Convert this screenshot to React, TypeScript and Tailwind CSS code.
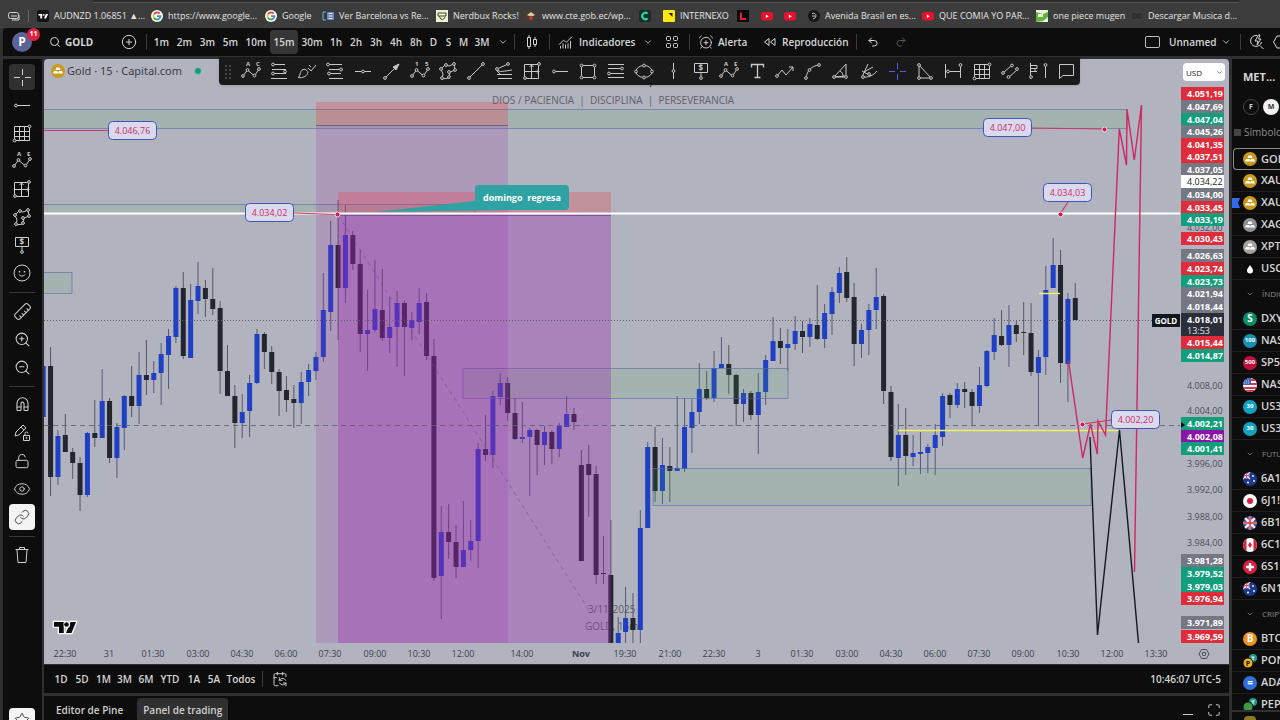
import React from "react";
import {
  AlarmClockPlus,
  CalendarSync,
  ChartNoAxesCombined,
  ChevronDown,
  CirclePlus,
  Eye,
  Link,
  LockOpen,
  Magnet,
  Maximize,
  Redo2,
  Ruler,
  Search,
  Smile,
  Star,
  Trash2,
  Undo2,
  ZoomIn,
  ZoomOut,
} from "lucide-react";

/* ---------- Bookmarks ---------- */

const GoogleIcon = () => (
  <svg viewBox="0 0 12 12" className="size-3">
    <circle cx="6" cy="6" r="6" fill="#fff" />
    <g fill="none" strokeWidth="1.8">
      <path d="M3 4.2A3.5 3.5 0 0 1 8.6 3.6" stroke="#ea4335" />
      <path d="M3 7.8A3.5 3.5 0 0 1 3 4.2" stroke="#fbbc05" />
      <path d="M8.2 8.7A3.5 3.5 0 0 1 3 7.8" stroke="#34a853" />
      <path d="M6 6.2H9.4A3.5 3.5 0 0 1 8.2 8.7" stroke="#4285f4" />
    </g>
  </svg>
);

const YoutubeIcon = () => (
  <svg viewBox="0 0 12 12" className="size-3">
    <rect y="2" width="12" height="8.5" rx="2.5" fill="#e8112d" />
    <path d="M4.8 4.5v3.5l3-1.75z" fill="#fff" />
  </svg>
);

const TvIcon = () => (
  <svg viewBox="0 0 12 12" className="size-3">
    <rect width="12" height="12" rx="2" fill="#131313" />
    <path d="M1.5 4h3.6v4.5H3.3V5.6H1.5zM8.8 4h2.3L9 8.5H7z" fill="#fff" />
    <circle cx="6.6" cy="4.9" r="0.9" fill="#fff" />
  </svg>
);

const NewsIcon = () => (
  <svg viewBox="0 0 12 12" className="size-3">
    <path d="M1 2h3M1 2v8h3M6 2v8M6 6h2" stroke="#7ea9dc" fill="none" />
    <rect x="5" y="2" width="7" height="8" fill="#5f86bd" />
    <path d="M6.5 3.5h4M6.5 6h4M6.5 8.5h4" stroke="#dfe9f6" />
  </svg>
);

const NerdIcon = () => (
  <svg viewBox="0 0 12 12" className="size-3">
    <rect width="12" height="12" fill="#f3f1d6" />
    <path d="M2 3h8v3H2zM4 8c1 2 4 2 5-1M3 6l2 3" stroke="#3d4a22" fill="none" />
  </svg>
);

const CrestIcon = () => (
  <svg viewBox="0 0 12 12" className="size-3">
    <circle cx="6" cy="6" r="5.5" fill="#4a3b33" />
    <path d="M2 5l4-3 4 3-2 1H4z" fill="#d7c9a0" />
    <circle cx="6" cy="8" r="2" fill="#b33f3a" />
  </svg>
);

const GreenC = () => (
  <svg viewBox="0 0 12 12" className="size-3">
    <rect width="12" height="12" rx="2" fill="#1e2a2a" />
    <path d="M8.6 3.6a3.2 3.2 0 1 0 0 4.8" stroke="#21d6a0" strokeWidth="2.2" fill="none" />
  </svg>
);

const NexoIcon = () => (
  <svg viewBox="0 0 12 12" className="size-3">
    <rect width="12" height="12" rx="1" fill="#ffe712" />
    <path d="M5.5 3h4v4L8 5.5z" fill="#222" />
  </svg>
);

const LogoL = () => (
  <svg viewBox="0 0 12 12" className="size-3">
    <rect width="12" height="12" fill="#0b0b0b" />
    <path d="M4 2.5v6.5h5" stroke="#e21b3c" strokeWidth="2" fill="none" />
  </svg>
);

const RoundDark = () => (
  <svg viewBox="0 0 12 12" className="size-3">
    <circle cx="6" cy="6" r="6" fill="#161616" />
    <path d="M4 3.5c4-1.500 6 4 1 5.500M4 6h3" stroke="#c9c9c9" fill="none" />
  </svg>
);

const GreenPic = () => (
  <svg viewBox="0 0 12 12" className="size-3">
    <rect width="12" height="12" fill="#e9f3df" />
    <path d="M0 2l7 2 5-2v5l-5 4-7 1z" fill="#5fb53c" />
    <path d="M2 4h5v3H2z" fill="#e9f3df" />
  </svg>
);

const DimIcon = () => (
  <svg viewBox="0 0 12 12" className="size-3">
    <path d="M2 4h3v4H2zM7 4h3v4H7z" stroke="#242424" fill="none" />
  </svg>
);

const bookmarks = [
  { icon: <TvIcon />, text: "AUDNZD 1.06851 ▲...", w: "w-[114px]" },
  { icon: <GoogleIcon />, text: "https://www.google...", w: "w-[114px]" },
  { icon: <GoogleIcon />, text: "Google", w: "w-[57px]" },
  { icon: <NewsIcon />, text: "Ver Barcelona vs Re...", w: "w-[114px]" },
  { icon: <NerdIcon />, text: "Nerdbux Rocks!", w: "w-[89px]" },
  { icon: <CrestIcon />, text: "www.cte.gob.ec/wp...", w: "w-[114px]" },
  { icon: <GreenC />, text: "", w: "w-6" },
  { icon: <NexoIcon />, text: "INTERNEXO", w: "w-[74px]" },
  { icon: <LogoL />, text: "", w: "w-6" },
  { icon: <YoutubeIcon />, text: "", w: "w-[23px]" },
  { icon: <YoutubeIcon />, text: "", w: "w-6" },
  { icon: <RoundDark />, text: "Avenida Brasil en es...", w: "w-[114px]" },
  { icon: <YoutubeIcon />, text: "QUE COMIA YO PAR...", w: "w-[114px]" },
  { icon: <GreenPic />, text: "one piece mugen", w: "w-[95px]" },
  { icon: <DimIcon />, text: "Descargar Musica d...", w: "w-[114px]" },
];

const BookmarksBar = () => (
  <nav className="flex h-7 shrink-0 flex-col bg-[#3c3c3c] text-[9px] font-medium text-[#e4e4e4]">
    <div className="mr-10 ml-23 h-[3px] shrink-0 rounded-b border-b border-[#555] bg-[#2a2a2a]" />
    <div className="flex flex-1 items-center pl-2">
      <svg viewBox="0 0 12 12" className="size-3 shrink-0" fill="none" stroke="#d5d5d5">
        <rect x="0.5" y="2.500" width="10" height="6" rx="2" />
        <path d="M3 6h6M4 10h7V5" />
      </svg>
      <span className="mx-2 h-3 w-px bg-[#666]" />
      {bookmarks.map((b, i) => (
        <a key={i} href="#" className={`flex shrink-0 items-center gap-[5px] whitespace-nowrap ${b.w}`}>
          {b.icon}
          {b.text}
        </a>
      ))}
    </div>
  </nav>
);

/* ---------- Drawing tool glyphs ---------- */

const N = ({ x, y }: { x: number; y: number }) => <circle cx={x} cy={y} r="1.4" fill="#1a1a1a" />;

const Zigzag = ({ a, b }: { a: string; b: string }) => (
  <>
    <path d="M2 15l4.500-6 7 6L18 8" />
    <N x={2} y={15} />
    <N x={6.5} y={9} />
    <N x={13.5} y={14.500} />
    <N x={18} y={8} />
    <text x="5" y="5" fontSize="6" fontWeight="700" fill="currentColor" stroke="none">
      {a}
    </text>
    <text x="15" y="5" fontSize="6" fontWeight="700" fill="currentColor" stroke="none">
      {b}
    </text>
  </>
);

const glyphs: Record<string, React.ReactNode> = {
  abc: <Zigzag a="A" b="C" />,
  waves: <Zigzag a="1" b="5" />,
  abcde: <Zigzag a="A" b="E" />,
  fibTrend: (
    <>
      <path d="M4 3.500h12M3 8.500h14M3 12.500h14M2 17.500h16" />
      <N x={4} y={3.5} />
      <N x={16} y={10.5} />
      <N x={4} y={12.5} />
    </>
  ),
  fibLevels: (
    <>
      <path d="M2 3.500h15M4 8.500h14M2 12.500h14M4 17.500h14" />
      <N x={3} y={3.5} />
      <N x={16} y={8.5} />
      <N x={4} y={12.5} />
    </>
  ),
  brush: <path d="M1 16.500c3-1 1-6 5-8 3-1 6 2 4 5-2 3-6 3.500-9 3zM11 7l3 3 5-6M12 4l2 2" />,
  hline: (
    <>
      <path d="M2 10.500h16" />
      <N x={10} y={10.5} />
    </>
  ),
  arrow: (
    <>
      <path d="M3 17L17 3" />
      <path d="M17 3l-6 3 3 3z" fill="currentColor" />
      <N x={3} y={17} />
    </>
  ),
  polygon: (
    <>
      <path d="M3 8l4-4 4 1 5-2 1 6-5 2-1 6-7 1 1-5z" />
      <N x={3} y={8} />
      <N x={8} y={4} />
      <N x={16} y={3} />
      <N x={17} y={9} />
      <N x={11} y={11} />
      <N x={11} y={16} />
      <N x={4} y={17} />
    </>
  ),
  trend: (
    <>
      <path d="M3 17L17 3" />
      <N x={3} y={17} />
      <N x={17} y={3} />
    </>
  ),
  fibFan: (
    <>
      <path d="M3 8l11-5M3 8c1 3 3 3 15 1M3 13.500h15M4 17.500h14M3 8v2l3 3" />
      <N x={3} y={8} />
      <N x={14} y={3} />
    </>
  ),
  range: (
    <>
      <path d="M2.500 3.500h14v14h-14zM9.500 4v13M3 10.500h14M7.500 6l2-2 2 2M15 8.500l2 2-2 2" />
      <N x={3} y={17} />
      <N x={17} y={3} />
    </>
  ),
  ray: (
    <>
      <path d="M4 10.500h14" />
      <N x={4} y={10.5} />
    </>
  ),
  rect: (
    <>
      <path d="M3.500 4.500h13v12h-13z" />
      <N x={3.5} y={4.5} />
      <N x={16.5} y={4.5} />
      <N x={3.5} y={16.5} />
      <N x={16.5} y={16.5} />
    </>
  ),
  fibExt: (
    <>
      <path d="M2 3.500h16M2 7.500h14M2 12.500h16M2 16.500h16" />
      <N x={16} y={7.500} />
      <N x={3} y={12.5} />
    </>
  ),
  ellipse: (
    <>
      <ellipse cx="10" cy="10.500" rx="8" ry="6" />
      <N x={2} y={10.5} />
      <N x={18} y={10.5} />
      <N x={10} y={4.5} />
      <N x={10} y={16.5} />
    </>
  ),
  vline: (
    <>
      <path d="M10.500 2v16" />
      <N x={10.5} y={10} />
    </>
  ),
  priceNote: (
    <>
      <path d="M3.500 2.500h13v9h-13zM10 12v4" />
      <N x={10} y={17} />
      <text x="7.500" y="10" fontSize="8" fontWeight="700" fill="currentColor" stroke="none">
        $
      </text>
    </>
  ),
  text: <path d="M4.500 6.500v-3h12v3M10.500 3.500v13M7.500 16.500h6" strokeWidth="1.300" />,
  zigArrow: (
    <>
      <path d="M2 15l5-6 4 5 7-8M14 6h4v4" />
      <N x={2} y={15} />
    </>
  ),
  curve: (
    <>
      <path d="M3 17C4 10 8 5 16 4" />
      <N x={3} y={17} />
      <N x={16} y={4} />
      <N x={6.5} y={9} />
    </>
  ),
  fanTriangle: (
    <>
      <path d="M3 16L15 3v12zM9 10c2 1 3 3 3 5M3 16h12" />
      <N x={3} y={16} />
      <N x={15} y={16} />
    </>
  ),
  wedge: (
    <>
      <path d="M9 3L3 16c6 1 12-2 15-6M5 11l9-5M3 10l9 5" />
      <N x={4} y={16} />
      <N x={10} y={13} />
    </>
  ),
  cross: <path d="M10.500 2v6M10.500 13v6M2 10.500h6M13 10.500h6" />,
  triangle: (
    <>
      <path d="M4 4v13h12z" />
      <N x={4} y={4} />
      <N x={4} y={17} />
      <N x={16} y={17} />
    </>
  ),
  dateRange: (
    <>
      <path d="M2.500 3v14M17.500 5v12M3 10.500h14" />
      <N x={17.5} y={4} />
      <N x={5} y={10.5} />
    </>
  ),
  grid: (
    <>
      <path d="M2.500 3.500h15v14h-15zM7.500 3v14M12.500 3v14M3 8.500h14M3 13.500h14" />
      <N x={2.5} y={17.5} />
      <N x={17.5} y={3.5} />
    </>
  ),
  channel: (
    <>
      <path d="M3 12l9-8M8 17l10-9" />
      <N x={3} y={12} />
      <N x={12} y={4.5} />
      <N x={8.5} y={16} />
      <N x={17} y={8} />
    </>
  ),
  volume: (
    <>
      <path d="M2.500 2v16M3 4.500h6v3H3M3 7.500h4v3H3M3 10.500h6M17.500 5v12" />
      <N x={17.5} y={4} />
      <N x={3} y={16} />
    </>
  ),
  comment: <path d="M3.500 3.500h14v11H7l-3.500 3z" />,
};

const Glyph = ({ name }: { name: string }) => (
  <svg viewBox="0 0 20 20" className="size-5" fill="none" stroke="currentColor" strokeWidth="1">
    {glyphs[name]}
  </svg>
);

const drawingTools = [
  "abc", "fibTrend", "brush", "fibLevels", "hline", "arrow", "waves", "polygon", "trend", "fibFan",
  "range", "ray", "rect", "fibExt", "ellipse", "vline", "priceNote", "abcde", "text", "zigArrow",
  "curve", "fanTriangle", "wedge", "cross", "triangle", "dateRange", "grid", "channel", "volume", "comment",
];

const DrawingToolbar = () => (
  <div className="absolute -top-0.5 left-[175px] z-10 flex h-7 w-[861px] items-center justify-between rounded-b bg-[#1a1a1a] text-[#c9c9c9] shadow">
    <svg viewBox="0 0 18 20" className="h-5 w-[18px]" fill="#5a5a5a">
      {[5, 9, 13, 17].map((y) => (
        <React.Fragment key={y}>
          <circle cx="7" cy={y} r="0.9" />
          <circle cx="11" cy={y} r="0.9" />
        </React.Fragment>
      ))}
    </svg>
    {drawingTools.map((t) => (
      <button
        key={t}
        aria-label={t}
        className={t === "cross" ? "flex h-7 w-7 items-center justify-center text-[#5357ff]" : "flex h-7 w-7 items-center justify-center"}
      >
        <Glyph name={t} />
      </button>
    ))}
  </div>
);

/* ---------- Header ---------- */

const intervals = [
  { label: "1m", w: "w-[23px]" },
  { label: "2m", w: "w-[23px]" },
  { label: "3m", w: "w-[23px]" },
  { label: "5m", w: "w-[23px]" },
  { label: "10m", w: "w-7" },
  { label: "15m", w: "w-7" },
  { label: "30m", w: "w-7" },
  { label: "1h", w: "w-5" },
  { label: "2h", w: "w-5" },
  { label: "3h", w: "w-5" },
  { label: "4h", w: "w-5" },
  { label: "8h", w: "w-5" },
  { label: "D", w: "w-[15px]" },
  { label: "S", w: "w-[15px]" },
  { label: "M", w: "w-[15px]" },
  { label: "3M", w: "w-[22px]" },
];

const Sep = () => <span className="h-4 w-px shrink-0 bg-[#3c3c3c]" />;

const Header = () => (
  <header className="ml-[3px] flex h-7 shrink-0 items-center overflow-hidden rounded-tl bg-[#0d0d0d] text-[10px] font-semibold whitespace-nowrap text-[#d6d6d6]">
    <div className="relative ml-[9px] flex size-5 shrink-0 items-center justify-center rounded-full bg-[#5b6398] text-[12px] font-bold text-white">
      P
      <span className="absolute -top-1 left-[15px] flex size-[13px] items-center justify-center rounded-full bg-[#e0203c] text-[7px]">
        11
      </span>
    </div>
    <button className="ml-[17px] flex w-[66px] items-center gap-1 font-bold">
      <Search size={12} strokeWidth={2} />
      GOLD
    </button>
    <button aria-label="Comparar" className="mr-[7px] ml-1 flex w-[20px] justify-center">
      <CirclePlus size={16} strokeWidth={1.5} />
    </button>
    <Sep />
    <div className="ml-[3px] flex">
      {intervals.map((it) => (
        <button
          key={it.label}
          className={`flex h-6 items-center justify-center rounded ${it.w} ${it.label === "15m" ? "bg-[#363636]" : ""}`}
        >
          {it.label}
        </button>
      ))}
    </div>
    <button aria-label="Intervalos" className="mr-0.5 flex w-[19px] justify-center">
      <ChevronDown size={10} />
    </button>
    <Sep />
    <button aria-label="Velas" className="flex w-[34px] justify-center">
      <svg viewBox="0 0 12 16" className="h-4 w-3" fill="none" stroke="currentColor">
        <path d="M1.500 3.500h3v9h-3zM3 1v2M3 13v2M7.500 5.500h3v5h-3zM9 3v2M9 11v2" />
      </svg>
    </button>
    <Sep />
    <button className="ml-2 flex w-[72px] items-center gap-1.5">
      <ChartNoAxesCombined size={15} strokeWidth={1.5} className="shrink-0" />
      Indicadores
    </button>
    <button aria-label="Favoritos" className="ml-1.5 flex w-6 justify-center">
      <ChevronDown size={10} />
    </button>
    <button aria-label="Plantillas" className="mr-[5px] flex w-6 justify-center">
      <svg viewBox="0 0 14 14" className="size-3.5" fill="none" stroke="currentColor">
        <rect x="1.500" y="1.500" width="4" height="4" rx="1" />
        <rect x="8.500" y="1.500" width="4" height="4" rx="1" />
        <rect x="1.500" y="8.500" width="4" height="4" rx="1" />
        <rect x="8.500" y="8.500" width="4" height="4" rx="1" />
      </svg>
    </button>
    <Sep />
    <button className="ml-2 flex w-[65px] items-center gap-1">
      <AlarmClockPlus size={16} strokeWidth={1.4} />
      Alerta
    </button>
    <button className="flex w-[93px] items-center gap-1.5">
      <svg viewBox="0 0 13 10" className="h-2.5 w-[13px]" fill="none" stroke="currentColor">
        <path d="M6 1.500v7L1.500 5zM12 1.500v7L7.500 5z" />
      </svg>
      Reproducción
    </button>
    <Sep />
    <button aria-label="Deshacer" className="ml-2.5 flex w-[14px]">
      <Undo2 size={12} />
    </button>
    <button aria-label="Rehacer" className="ml-[14px] flex text-[#5a5a5a]">
      <Redo2 size={12} />
    </button>
    <button className="ml-auto flex items-center gap-[9px]">
      <span className="h-3 w-[15px] rounded-xs border border-[#bdbdbd]" />
      <span className="w-[47px] text-left">Unnamed</span>
    </button>
    <button aria-label="Diseños" className="mr-1 flex w-5 items-center justify-center">
      <ChevronDown size={10} />
    </button>
    <Sep />
    <button aria-label="Búsqueda rápida" className="ml-2 flex w-[31px]">
      <svg viewBox="0 0 16 16" className="size-4 shrink-0" fill="none" stroke="currentColor">
        <path d="M8 1.500A5.500 5.500 0 1 0 12.500 8M11 11.500l3.500 3.500M9.500 1L6 7h3l-1 4 4-6H9.500L11 1z" />
      </svg>
      <svg viewBox="0 0 16 16" className="ml-2 size-4 shrink-0" fill="none" stroke="currentColor">
        <path d="M4 2h8l4 6-4 6H4L0.500 8z" />
      </svg>
    </button>
  </header>
);

/* ---------- Left tools ---------- */

const ToolButton = ({ label, active, children }: { label: string; active?: string; children: React.ReactNode }) => (
  <button aria-label={label} className="flex h-7 w-full shrink-0 items-center justify-center">
    <span className={`flex size-[26px] items-center justify-center rounded ${active ?? ""}`}>{children}</span>
  </button>
);

const ToolSep = () => <span className="mt-[5px] mb-1 h-px w-[26px] shrink-0 bg-[#383838]" />;

const LeftTools = () => (
  <aside className="flex w-[39px] shrink-0 flex-col items-center overflow-hidden bg-[#0d0d0d] pt-1 pr-px text-[#cfcfcf]">
    <ToolButton label="Cursor" active="bg-[#303030]">
      <Glyph name="cross" />
    </ToolButton>
    <ToolButton label="Rayo horizontal">
      <Glyph name="ray" />
    </ToolButton>
    <ToolButton label="Cuadrícula">
      <Glyph name="grid" />
    </ToolButton>
    <ToolButton label="Ondas">
      <Glyph name="abcde" />
    </ToolButton>
    <ToolButton label="Rango">
      <Glyph name="range" />
    </ToolButton>
    <ToolButton label="Polígono">
      <Glyph name="polygon" />
    </ToolButton>
    <ToolButton label="Nota de precio">
      <Glyph name="priceNote" />
    </ToolButton>
    <ToolButton label="Iconos">
      <svg viewBox="0 0 20 20" className="size-5" fill="none" stroke="currentColor">
        <circle cx="10" cy="10" r="8" />
        <path d="M7 11.500c1 2 5 2 6 0" />
        <path d="M7.500 8v1.500M12.500 8v1.500" strokeWidth="1.500" />
      </svg>
    </ToolButton>
    <ToolSep />
    <ToolButton label="Medir">
      <Ruler size={19} strokeWidth={1.3} className="rotate-90" />
    </ToolButton>
    <ToolButton label="Acercar">
      <ZoomIn size={17} strokeWidth={1.5} />
    </ToolButton>
    <ToolButton label="Alejar">
      <ZoomOut size={17} strokeWidth={1.5} />
    </ToolButton>
    <ToolSep />
    <ToolButton label="Imán">
      <Magnet size={17} strokeWidth={1.5} className="-rotate-45" />
    </ToolButton>
    <ToolButton label="Modo dibujo">
      <svg viewBox="0 0 20 20" className="size-5" fill="none" stroke="currentColor">
        <path d="M3 13l1-4 7-7 3 3-7 7zM9 4l3 3M11.500 12.500h6v5h-6zM13 12v-1.500a1.500 1.500 0 0 1 3 0" />
        <circle cx="14.500" cy="15" r="0.600" />
      </svg>
    </ToolButton>
    <ToolButton label="Bloquear">
      <LockOpen size={16} strokeWidth={1.5} />
    </ToolButton>
    <ToolButton label="Ocultar">
      <Eye size={18} strokeWidth={1.3} />
    </ToolButton>
    <ToolButton label="Vincular" active="bg-[#f4f4f4] text-[#333]">
      <Link size={16} strokeWidth={1.3} />
    </ToolButton>
    <ToolSep />
    <ToolButton label="Eliminar">
      <svg viewBox="0 0 20 20" className="size-5" fill="none" stroke="currentColor">
        <path d="M3.500 4.500h13M7.500 4v-1.500h5V4M5 5l1 12.500h8L15 5" />
      </svg>
    </ToolButton>
    <button aria-label="Favoritos" className="mt-auto h-3 w-[26px] shrink-0 overflow-hidden rounded-t bg-[#f4f4f4] text-[#333]">
      <Star size={16} strokeWidth={1.3} className="mx-auto mt-1" />
    </button>
  </aside>
);

/* ---------- Chart ---------- */

// [high, body top, body bottom, low, rising]
const candles: [number, number, number, number, 0 | 1][] = [
  [366, 366, 417, 417, 1], [347, 366, 477, 496, 0], [430, 436, 477, 485, 1], [414, 435, 452, 452, 0],
  [448, 452, 463, 479, 0], [457, 463, 495, 511, 0], [432, 433, 495, 497, 1], [400, 433, 438, 447, 0],
  [369, 401, 438, 438, 1], [398, 401, 458, 463, 0], [423, 427, 458, 478, 1], [395, 396, 428, 450, 1],
  [366, 396, 406, 417, 0], [352, 375, 406, 424, 1], [340, 375, 380, 395, 0], [361, 373, 380, 393, 1],
  [343, 354, 373, 405, 1], [329, 336, 355, 389, 1], [286, 288, 337, 343, 1], [272, 288, 356, 359, 0],
  [284, 300, 358, 358, 1], [262, 286, 301, 314, 1], [280, 288, 299, 317, 0], [268, 299, 309, 315, 0],
  [301, 308, 371, 394, 0], [345, 371, 396, 396, 0], [385, 396, 423, 448, 0], [394, 412, 423, 438, 1],
  [375, 383, 411, 437, 1], [329, 334, 383, 384, 1], [332, 334, 352, 369, 0], [346, 352, 372, 384, 0],
  [369, 372, 391, 416, 0], [376, 390, 400, 412, 0], [385, 399, 403, 428, 0], [372, 382, 403, 424, 1],
  [364, 370, 382, 396, 1], [352, 357, 371, 380, 1], [273, 310, 357, 362, 1], [221, 245, 312, 331, 1],
  [200, 245, 288, 340, 0], [205, 235, 288, 303, 1], [231, 235, 264, 270, 0], [250, 264, 334, 352, 0],
  [290, 330, 334, 371, 1], [260, 309, 330, 332, 1], [269, 310, 338, 341, 0], [297, 327, 338, 353, 1],
  [291, 303, 327, 367, 1], [301, 303, 327, 376, 0], [312, 320, 328, 340, 1], [288, 303, 322, 334, 1],
  [293, 302, 356, 360, 0], [339, 356, 578, 581, 0], [506, 532, 576, 619, 1], [504, 532, 542, 559, 0],
  [525, 542, 567, 578, 0], [501, 550, 567, 567, 1], [520, 541, 550, 561, 1], [443, 449, 541, 568, 1],
  [415, 449, 455, 461, 0], [391, 396, 455, 468, 1], [373, 383, 397, 405, 1], [377, 383, 413, 421, 0],
  [398, 413, 439, 440, 0], [402, 437, 439, 443, 1], [428, 430, 437, 496, 1], [429, 430, 445, 475, 0],
  [426, 432, 445, 465, 1], [430, 432, 449, 464, 0], [423, 426, 449, 457, 1], [396, 414, 427, 427, 1],
  [408, 414, 422, 430, 0], [450, 465, 561, 561, 0], [445, 464, 475, 517, 0], [466, 474, 575, 584, 0],
  [536, 573, 574, 584, 0], [520, 575, 643, 643, 0], [617, 633, 643, 643, 1], [587, 618, 632, 643, 1],
  [593, 618, 630, 643, 0], [510, 528, 630, 643, 1], [442, 447, 528, 528, 1], [427, 447, 491, 502, 0],
  [438, 465, 491, 504, 1], [447, 466, 471, 502, 0], [396, 468, 471, 471, 1], [398, 427, 469, 472, 1],
  [399, 412, 428, 453, 1], [363, 389, 412, 424, 1], [371, 389, 398, 400, 0], [351, 368, 398, 402, 1],
  [337, 364, 368, 368, 1], [345, 364, 375, 394, 0], [374, 375, 404, 426, 0], [389, 393, 404, 422, 1],
  [391, 393, 415, 420, 0], [373, 392, 415, 454, 1], [355, 360, 392, 405, 1], [317, 341, 361, 361, 1],
  [328, 341, 348, 364, 0], [329, 344, 348, 371, 1], [316, 331, 344, 350, 1], [321, 331, 337, 353, 0],
  [318, 324, 337, 347, 1], [285, 325, 339, 340, 0], [304, 313, 339, 348, 1], [287, 292, 314, 335, 1],
  [267, 273, 293, 303, 1], [257, 272, 298, 302, 0], [283, 297, 344, 366, 0], [324, 330, 344, 358, 1],
  [304, 310, 330, 355, 1], [268, 297, 310, 329, 1], [294, 296, 391, 404, 0], [386, 392, 457, 461, 0],
  [404, 435, 458, 486, 1], [408, 435, 456, 475, 0], [435, 453, 457, 466, 1], [432, 452, 454, 474, 1],
  [444, 447, 453, 473, 1], [424, 435, 448, 475, 1], [393, 396, 437, 446, 1], [393, 395, 405, 418, 0],
  [383, 389, 405, 408, 1], [382, 389, 392, 408, 0], [389, 392, 406, 426, 0], [367, 385, 406, 413, 1],
  [350, 351, 386, 387, 1], [318, 335, 352, 360, 1], [310, 336, 345, 346, 0], [305, 325, 345, 367, 1],
  [321, 325, 334, 342, 0], [302, 332, 333, 355, 0], [303, 333, 372, 376, 0], [350, 357, 373, 426, 1],
  [266, 290, 357, 375, 1], [238, 265, 288, 288, 1], [250, 265, 363, 383, 0], [293, 299, 364, 402, 1],
  [283, 298, 320, 320, 0],
];

const FIRST_X = 43.2;
const STEP = 7.372;

const zones = [
  { x: 40, y: 109, w: 1087, h: 19 },
  { x: 40, y: 204, w: 435, h: 9 },
  { x: 40, y: 272, w: 32, h: 21 },
  { x: 463, y: 368, w: 325, h: 30 },
  { x: 653, y: 468, w: 438, h: 37 },
];

const priceTags = [
  { x: 108, y: 121, text: "4.046,76" },
  { x: 245, y: 203, text: "4.034,02" },
  { x: 983, y: 118, text: "4.047,00" },
  { x: 1043, y: 183, text: "4.034,03" },
  { x: 1111, y: 410, text: "4.002,20" },
];

const anchors = [
  [337, 214],
  [1060, 214],
  [1104, 129],
  [1082, 424],
];

const ChartCanvas = () => (
  <svg viewBox="44 59 1136 584" preserveAspectRatio="xMinYMin slice" className="min-h-0 w-full flex-1">
    <g fill="#5d606d" fontSize="10">
      <text x="492" y="104" className="whitespace-pre">
        {"DIOS / PACIENCIA  |  DISCIPLINA  |  PERSEVERANCIA"}
      </text>
      <text x="588" y="613">3/11/2025</text>
      <text x="585" y="630">GOLD, 15m</text>
    </g>
    <path d="M650 87l2-3" stroke="#222" />

    {candles.map(([high, top, bottom, low, up], i) => {
      const x = FIRST_X + i * STEP;
      return (
        <g key={i}>
          <path d={`M${x} ${high}V${low}`} stroke={up ? "#4a4f74" : "#4b4d55"} strokeOpacity="0.9" />
          <rect x={x - 2.5} y={top} width="5" height={bottom - top} fill={up ? "#1f3fc4" : "#23252f"} />
        </g>
      );
    })}

    {/* supply and demand zones */}
    {zones.map((z) => (
      <g key={z.y}>
        <rect x={z.x} y={z.y} width={z.w} height={z.h} fill="#4caf50" fillOpacity="0.12" />
        <path d={`M${z.x} ${z.y + 0.5}h${z.w}v${z.h}h${-z.w}z`} fill="none" stroke="#5b68ab" strokeOpacity="0.6" />
      </g>
    ))}

    {/* short positions */}
    <rect x="316" y="125" width="192" height="518" fill="#9c27b0" fillOpacity="0.18" />
    <rect x="316" y="102" width="192" height="23" fill="#f23645" fillOpacity="0.28" />
    <rect x="338" y="215" width="273" height="428" fill="#9c27b0" fillOpacity="0.34" />
    <rect x="338" y="192" width="273" height="23" fill="#f23645" fillOpacity="0.28" />
    <path d="M316 125.500h192M338 215.500h273" stroke="#6a4a9c" strokeOpacity="0.8" />
    <path d="M338 215L590 612" stroke="#6b4a7c" strokeOpacity="0.5" strokeDasharray="4 4" />

    {/* reference levels */}
    <path d="M44 320.500h1108" stroke="#5c5f68" strokeDasharray="1 2" />
    <path d="M44 425.500h1136" stroke="#5c5f68" strokeOpacity="0.8" strokeDasharray="5 4" />
    <path d="M375 212L475 201v-8h30v17z" fill="#2fa3a3" />
    <path d="M44 213.500h1136" stroke="#fff" strokeWidth="2" />
    <path d="M898 430.500h220M1039 293.500h21" stroke="#eef06a" strokeWidth="1.500" />
    <rect x="475" y="185" width="94" height="25" rx="4" fill="#2fa3a3" />
    <text x="522" y="201" textAnchor="middle" fontSize="9" fontWeight="700" fill="#fff" className="whitespace-pre">
      {"domingo  regresa"}
    </text>

    {/* projected paths */}
    <path
      d="M1090 437L1097.500 635L1119.500 430L1138.500 643"
      fill="none"
      stroke="#16181f"
      strokeWidth="1.400"
    />
    <path
      d="M1068.500 361L1082.700 458L1090.500 424L1097.300 454L1098 421L1105.500 435L1119.300 129L1126.500 165L1127 109L1134.300 160L1141.500 105L1134.500 572"
      fill="none"
      stroke="#cf2763"
      strokeWidth="1.400"
    />
    <path
      d="M44 130.500h65M294 213l43 1.500M1031 128l73 1M1068 202l-8 12M1111 420l-28 4"
      fill="none"
      stroke="#d0365f"
      strokeWidth="1.200"
    />
    {anchors.map(([x, y]) => (
      <circle key={x} cx={x + 0.5} cy={y + 0.5} r="2.500" fill="#d01f4d" stroke="#f6dfe6" />
    ))}
    {priceTags.map((t) => (
      <g key={t.text}>
        <rect x={t.x + 0.5} y={t.y + 0.5} width="48" height="18" rx="4" fill="#d9daee" stroke="#4552b8" />
        <text x={t.x + 24.5} y={t.y + 13} textAnchor="middle" fontSize="9" fill="#d02c63">
          {t.text}
        </text>
      </g>
    ))}

    {/* last price tag */}
    <rect x="1152" y="314" width="28" height="13" fill="#14161d" />
    <text x="1166" y="324" textAnchor="middle" fontSize="8" fontWeight="700" fill="#fff">
      GOLD
    </text>

    <g stroke="#fff" strokeWidth="2.500" paintOrder="stroke" fill="#0a0a0a">
      <path d="M54 622h9.500v11h-4.500v-6.500h-5zM70.500 622h5.500l-4.500 11h-5.500z" />
      <circle cx="66.500" cy="624.500" r="2.300" />
      <path stroke="none" d="M54 622h9.500v11h-4.500v-6.500h-5z" />
    </g>
  </svg>
);

const times: [number, string][] = [
  [65, "22:30"], [109, "31"], [153, "01:30"], [198, "03:00"], [242, "04:30"], [286, "06:00"],
  [330, "07:30"], [375, "09:00"], [419, "10:30"], [463, "12:00"], [522, "14:00"], [581, "Nov"],
  [625, "19:30"], [670, "21:00"], [714, "22:30"], [758, "3"], [802, "01:30"], [847, "03:00"],
  [891, "04:30"], [935, "06:00"], [979, "07:30"], [1023, "09:00"], [1068, "10:30"], [1112, "12:00"],
  [1156, "13:30"],
];

const TimeAxis = () => (
  <svg viewBox="44 643 1136 21" preserveAspectRatio="xMinYMid slice" className="h-[21px] w-full shrink-0">
    {times.map(([x, label]) => (
      <text
        key={x}
        x={x}
        y="657"
        textAnchor="middle"
        fontSize="9"
        fontWeight={label === "Nov" ? 700 : 400}
        fill="#3d404b"
      >
        {label}
      </text>
    ))}
  </svg>
);

const GRAY = "bg-[#757883] text-white font-bold";
const RED = "bg-[#e02c3a] text-white font-bold";
const GREEN = "bg-[#129e7b] text-white font-bold";
const PLAIN = "text-[#4a4d58]";

const prices: [number, string, string][] = [
  [228, "4.032,00", PLAIN],
  [94, "4.051,19", RED], [107, "4.047,69", GRAY], [120, "4.047,04", GREEN], [132, "4.045,26", GRAY],
  [145, "4.041,35", RED], [157, "4.037,51", RED], [170, "4.037,05", GRAY],
  [182, "4.034,22", "bg-white text-[#222]"], [195, "4.034,00", GRAY], [208, "4.033,45", RED],
  [220, "4.033,19", GREEN], [239, "4.030,43", RED], [256, "4.026,63", GRAY], [269, "4.023,74", RED],
  [282, "4.023,73", GREEN], [294, "4.021,94", GRAY], [307, "4.018,44", GRAY],
  [331, "13:53", "bg-[#2b2e39] text-[#e4e4e4]"], [320, "4.018,01", "bg-[#2b2e39] text-white font-bold"],
  [343, "4.015,44", RED], [356, "4.014,87", GREEN], [386, "4.008,00", PLAIN], [411, "4.004,00", PLAIN],
  [424, "4.002,21", GREEN], [437, "4.002,08", "bg-[#8a14a8] text-white font-bold"],
  [449, "4.001,41", GREEN], [464, "3.996,00", PLAIN], [490, "3.992,00", PLAIN], [517, "3.988,00", PLAIN],
  [543, "3.984,00", PLAIN], [561, "3.981,28", GRAY], [574, "3.979,52", GREEN], [587, "3.979,03", GREEN],
  [599, "3.976,94", RED], [623, "3.971,89", GRAY], [637, "3.969,59", RED],
];

const PriceAxis = () => (
  <div className="relative w-[49px] shrink-0 text-[9px] leading-[13px]">
    <select
      aria-label="Moneda"
      className="absolute top-1 left-[3px] h-[18px] w-[42px] appearance-none rounded-sm bg-white pl-[3px] text-[8px] text-[#222]"
    >
      <option>USD</option>
    </select>
    <ChevronDown size={7} className="absolute top-[10px] left-9 text-[#222]" />
    {prices.map(([y, label, tone]) => (
      <span key={label} className={`absolute left-px h-[13px] w-[43px] pl-1.5 ${tone}`} style={{ top: y - 66 }}>
        {label}
      </span>
    ))}
    <svg viewBox="0 0 6 8" className="absolute top-[362px] left-0 h-2 w-1.5">
      <path d="M1 1l4 3-4 3z" fill="#111" />
    </svg>
    <button aria-label="Ajustes del eje" className="absolute bottom-1 left-[18px]">
      <svg viewBox="0 0 12 12" className="size-3" fill="none" stroke="#4a4d58">
        <path d="M3.500 1.500h5L11 6l-2.500 4.500h-5L1 6z" />
        <circle cx="6" cy="6" r="1.800" />
      </svg>
    </button>
  </div>
);

const GoldCoin = ({ color }: { color: string }) => (
  <svg viewBox="0 0 14 14" className="size-3.5 shrink-0">
    <circle cx="7" cy="7" r="7" fill={color} />
    <path d="M5.500 3.500h3l1 2.500h-5zM3 7h3.200l1 2.500H2zM7.800 7H11l1 2.500H6.900z" fill="#fff" />
  </svg>
);

const Chart = () => (
  <section className="relative flex min-h-0 flex-1 rounded-t bg-[#b1b4be]">
    <div className="flex min-w-0 flex-1 flex-col">
      <ChartCanvas />
      <TimeAxis />
    </div>
    <PriceAxis />
    <div className="absolute top-1 left-[7px] flex items-center font-['Noto_Sans','Open_Sans',sans-serif] text-[11px] leading-4 text-[#3b3d48]">
      <GoldCoin color="#c99a1c" />
      <span className="ml-0.5 w-[119px]">Gold · 15 · Capital.com</span>
      <span className="ml-2 size-2 rounded-full border border-[#8bc4b6] bg-[#14997a]" />
    </div>
    <DrawingToolbar />
  </section>
);

/* ---------- Footer bars ---------- */

const ranges = [
  { label: "1D", w: "w-5" },
  { label: "5D", w: "w-[22px]" },
  { label: "1M", w: "w-[21px]" },
  { label: "3M", w: "w-[21px]" },
  { label: "6M", w: "w-[22px]" },
  { label: "YTD", w: "w-[26px]" },
  { label: "1A", w: "w-[22px]" },
  { label: "5A", w: "w-[18px]" },
  { label: "Todos", w: "w-[36px]" },
];

const RangeBar = () => (
  <div className="mt-px flex h-7 shrink-0 items-center bg-[#0d0d0d] pr-2 pl-[7px] text-[10px] font-semibold text-[#d6d6d6]">
    {ranges.map((r) => (
      <button key={r.label} className={`flex justify-center ${r.w}`}>
        {r.label}
      </button>
    ))}
    <span className="ml-[3px] flex">
      <Sep />
    </span>
    <button aria-label="Ir a la fecha" className="ml-[9px]">
      <CalendarSync size={16} strokeWidth={1.4} />
    </button>
    <span className="ml-auto">10:46:07 UTC-5</span>
  </div>
);

const PanelTabs = () => (
  <div className="mt-[3px] flex h-6 shrink-0 items-end bg-[#0d0d0d] pr-2 text-[10px] font-semibold text-[#d0d0d0]">
    <button className="ml-1.5 flex h-[22px] items-center px-1.5 pt-0.5">Editor de Pine</button>
    <button className="ml-2 flex h-[22px] items-center rounded-t bg-[#303030] px-1.5 pt-0.5">Panel de trading</button>
    <button aria-label="Minimizar" className="mb-[5px] ml-auto h-px w-2.5 bg-[#cfcfcf]" />
    <button aria-label="Maximizar" className="mb-[3px] ml-[14px]">
      <Maximize size={14} strokeWidth={1.600} />
    </button>
  </div>
);

/* ---------- Watchlist ---------- */

const Dot = ({ bg, text }: { bg: string; text: string }) => (
  <span
    className={`flex size-3.5 shrink-0 items-center justify-center rounded-full font-bold text-white ${bg} ${text.length > 1 ? "text-[6px]" : "text-[10px]"}`}
  >
    {text}
  </span>
);

const Flag = ({ base, children }: { base: string; children?: React.ReactNode }) => (
  <svg viewBox="0 0 14 14" className="size-3.5 shrink-0 rounded-full">
    <rect width="14" height="14" fill={base} />
    {children}
  </svg>
);

const UsFlag = () => (
  <Flag base="#fff">
    <path d="M0 2h14M0 6h14M0 10h14M0 13h14" stroke="#d8344a" strokeWidth="1.800" />
    <rect width="8" height="7" fill="#3a66c0" />
    <path d="M1 3h6M1 5h6" stroke="#cfdcf5" strokeDasharray="1 1" />
  </Flag>
);

const SouthFlag = () => (
  <Flag base="#1c3b8f">
    <path d="M0 3.500h7M3.500 0v7M0 0l7 7M7 0L0 7" stroke="#f1dfe4" strokeWidth="1.400" />
    <path d="M0 3.500h7M3.500 0v7" stroke="#d8344a" strokeWidth="0.800" />
    <circle cx="10" cy="4" r="0.900" fill="#fff" />
    <circle cx="11" cy="9" r="0.900" fill="#fff" />
    <circle cx="5" cy="10.500" r="1" fill="#fff" />
  </Flag>
);

const CoinPair = ({ color, text }: { color: string; text: string }) => (
  <svg viewBox="0 0 14 14" className="size-3.5 shrink-0">
    <circle cx="10" cy="4" r="4" fill="#1f9c8a" />
    <path d="M8.500 3h3M10 3v3.500" stroke="#fff" />
    <circle cx="5" cy="9" r="5" fill={color} stroke="#0d0d0d" />
    <text x="5" y="11.500" textAnchor="middle" fontSize="7" fontWeight="700" fill="#111">
      {text}
    </text>
  </svg>
);

interface Row {
  icon: React.ReactNode;
  name: string;
}

const groups: { title?: string; rows: Row[] }[] = [
  {
    rows: [
      { icon: <GoldCoin color="#c99a1c" />, name: "GOLD" },
      { icon: <GoldCoin color="#c99a1c" />, name: "XAUUSD" },
      { icon: <GoldCoin color="#c99a1c" />, name: "XAUEUR" },
      { icon: <GoldCoin color="#8f9096" />, name: "XAGUSD" },
      { icon: <GoldCoin color="#a5a29c" />, name: "XPTUSD" },
      {
        icon: (
          <Flag base="#0a0a0a">
            <path d="M7 3c2 3 3 4 3 5.500a3 3 0 0 1-6 0C4 7 5 6 7 3z" fill="#fff" />
          </Flag>
        ),
        name: "USOIL",
      },
    ],
  },
  {
    title: "ÍNDICES",
    rows: [
      { icon: <Dot bg="bg-[#0d8f63]" text="S" />, name: "DXY" },
      { icon: <Dot bg="bg-[#1590b0]" text="100" />, name: "NAS100" },
      { icon: <Dot bg="bg-[#c00f3c]" text="500" />, name: "SP500" },
      { icon: <UsFlag />, name: "NAS100" },
      { icon: <Dot bg="bg-[#12a3c4]" text="30" />, name: "US30" },
      { icon: <Dot bg="bg-[#12a3c4]" text="30" />, name: "US30" },
    ],
  },
  {
    title: "FUTUROS",
    rows: [
      { icon: <SouthFlag />, name: "6A1!" },
      {
        icon: (
          <Flag base="#fff">
            <circle cx="7" cy="7" r="3" fill="#d8203e" />
          </Flag>
        ),
        name: "6J1!",
      },
      {
        icon: (
          <Flag base="#21418f">
            <path d="M0 0l14 14M14 0L0 14M7 0v14M0 7h14" stroke="#f3e6ea" strokeWidth="2.600" />
            <path d="M7 0v14M0 7h14" stroke="#d8344a" strokeWidth="1.500" />
          </Flag>
        ),
        name: "6B1!",
      },
      {
        icon: (
          <Flag base="#fff">
            <path d="M0 0h3.500v14H0zM10.500 0H14v14h-3.500zM7 4l2 3-2 3-2-3z" fill="#d8203e" />
          </Flag>
        ),
        name: "6C1!",
      },
      {
        icon: (
          <Flag base="#d8203e">
            <path d="M7 3v8M3 7h8" stroke="#fff" strokeWidth="2.400" />
          </Flag>
        ),
        name: "6S1!",
      },
      { icon: <SouthFlag />, name: "6N1!" },
    ],
  },
  {
    title: "CRIPTO",
    rows: [
      { icon: <Dot bg="bg-[#ee9120]" text="B" />, name: "BTCUSD" },
      { icon: <CoinPair color="#efb21c" text="P" />, name: "PONKE" },
      { icon: <Dot bg="bg-[#2f6fd6]" text="=" />, name: "ADAUSD" },
      { icon: <CoinPair color="#3f9a45" text="" />, name: "PEPE" },
    ],
  },
];

const Watchlist = () => (
  <aside className="flex w-12 shrink-0 flex-col overflow-hidden bg-[#0d0d0d] text-[11px] font-semibold whitespace-nowrap text-[#d6d6d6]">
    <button className="mt-2 ml-[11px] flex h-5 shrink-0 items-center gap-2 text-[11px] font-bold">
      MET... <ChevronDown size={10} />
    </button>
    <div className="mt-3 ml-[11px] flex shrink-0 gap-1 text-[7px] font-bold">
      <button className="flex size-4 shrink-0 items-center justify-center rounded-full border border-[#444]">F</button>
      <button className="flex size-4 shrink-0 items-center justify-center rounded-full bg-[#f2f2f2] text-[#333]">
        M
      </button>
    </div>
    <div className="mt-[9px] flex h-4 shrink-0 items-center gap-[3px] pl-0.5 text-[10px] font-normal text-[#8c8c8c]">
      <span className="size-[7px] shrink-0 bg-[#444]" />
      Símbolo
    </div>
    <div className="mt-2 flex min-h-0 flex-1 flex-col overflow-hidden">
      {groups.map((g, gi) => (
        <section key={gi}>
          {g.title && (
            <h3 className="flex h-7 items-center gap-2 pl-[14px] text-[8px] font-normal text-[#8c8c8c]">
              <ChevronDown size={8} className="shrink-0" />
              {g.title}
            </h3>
          )}
          {g.rows.map((r, i) => (
            <div
              key={i}
              className={`flex h-[22px] items-center gap-1 ${
                gi === 0 && i === 0
                  ? "ml-px rounded-l border border-r-0 border-[#8a8a8a] pl-[9px]"
                  : "border-b border-[#1f1f1f]"
              }`}
            >
              {!(gi === 0 && i === 0) && (
                <span className="-mr-1 h-2.5 w-[11px] shrink-0">
                  {gi === 0 && i === 2 && (
                    <svg viewBox="0 0 8 10" className="h-2.5 w-2">
                      <path d="M0 0h8L6 5l2 5H0z" fill="#2f6bea" />
                    </svg>
                  )}
                </span>
              )}
              {r.icon}
              {r.name}
            </div>
          ))}
        </section>
      ))}
    </div>
    <div className="h-2.5 shrink-0 border-t-2 border-[#303030]">
      <span className="mx-auto mt-1 ml-3 block h-1 w-3 rounded-t-full bg-[#8a7a20]" />
    </div>
  </aside>
);

const App: React.FC = () => {
  return (
    <div className="flex h-screen flex-col overflow-hidden bg-[#303030] font-['Open_Sans','Noto_Sans',sans-serif]">
      <BookmarksBar />
      <Header />
      <main className="mt-[3px] ml-[3px] flex min-h-0 flex-1">
        <LeftTools />
        <div className="mx-[2px] mr-[3px] flex min-w-0 flex-1 flex-col">
          <Chart />
          <RangeBar />
          <PanelTabs />
        </div>
        <Watchlist />
      </main>
    </div>
  );
};

export default App;
